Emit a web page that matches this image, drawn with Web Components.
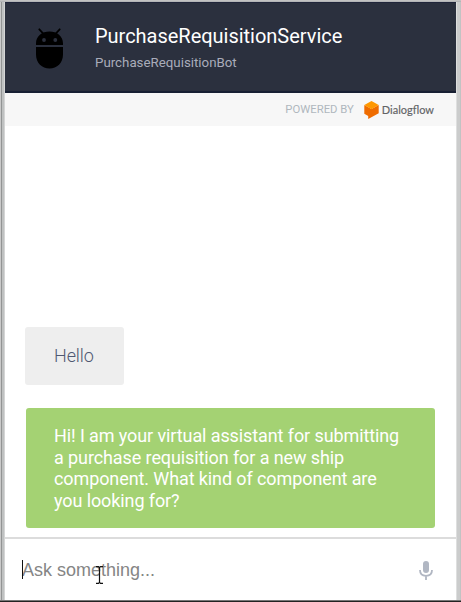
<!DOCTYPE html>
<html lang="en"><head><meta charset="utf-8"><title>PurchaseRequisitionService</title>
<style>
body{margin:0;width:461px;height:602px;overflow:hidden;font-family:Roboto,"Liberation Sans",sans-serif}
</style></head><body>
<chat-window>
<chat-header name="PurchaseRequisitionService"><span>PurchaseRequisitionBot</span></chat-header>
<powered-by></powered-by>
<chat-log>
<chat-bubble kind="user">Hello</chat-bubble>
<chat-bubble kind="bot">Hi! I am your virtual assistant for submitting<br>a purchase requisition for a new ship<br>component. What kind of component are<br>you looking for?</chat-bubble>
</chat-log>
<chat-input>Ask something...</chat-input>
</chat-window>
<script>
function define(name, html, setup){
  customElements.define(name, class extends HTMLElement{
    constructor(){super();this.attachShadow({mode:'open'}).innerHTML=html;}
    connectedCallback(){if(setup)setup(this,this.shadowRoot);}
  });
}
define('chat-window', `<style>
:host{display:grid;grid-template-columns:5px 451px 5px;grid-template-rows:2px 598px 2px;width:461px;height:602px;background:#fff}
.t{grid-column:1/4;background:linear-gradient(#c2c2c2 50%,#b4b5b7 50%)}
.l{background:linear-gradient(90deg,#c9c9c9 0 1px,#929494 1px 2px,#bfc1c1 2px 4px,#d4d5d5 4px)}
.r{background:linear-gradient(90deg,#dedfdf 0 1px,#cbcccc 1px 4px,#c2c3c3 4px)}
.b{grid-column:1/4;background:linear-gradient(#777 50%,#222 50%)}
main{display:flex;flex-direction:column;min-width:0}
</style><div class="t"></div><div class="l"></div><main><slot></slot></main><div class="r"></div><div class="b"></div>`);
define('chat-header', `<style>
:host{display:flex;box-sizing:border-box;height:91px;padding:0 0 0 30px;background:#2b303e;border-top:1px solid #20253a;border-bottom:2px solid #182033}
svg{width:29px;height:42px;margin-top:24px}
div{margin-left:31px;padding-top:20px}
h1{margin:0;font-weight:400;font-size:20px;line-height:26px;color:#fff;white-space:nowrap;letter-spacing:-.02px}
p{margin:5px 0 0;font-size:13.300px;line-height:18px;color:#a9acba}
</style>
<svg viewBox="0 0 29 42"><path d="M1 18V16.500C1 9 7 4.500 14.500 4.500S28 9 28 16.500V18zM1 20h27v7.500C28 36 22 41.500 14.500 41.500S1 36 1 27.500z"/><path d="M4.300 2.300l4.200 4.500M24.700 2.300l-4.200 4.500" stroke="#000" stroke-width="1.800" stroke-linecap="round"/><circle cx="9" cy="13" r="1.900" fill="#2b303e"/><circle cx="20.300" cy="13" r="1.900" fill="#2b303e"/></svg>
<div><h1></h1><p><slot></slot></p></div>`, (e,r)=>{r.querySelector('h1').textContent=e.getAttribute('name')});
define('powered-by', `<style>
:host{display:flex;height:33px;background:#f7f7f7;align-items:center;justify-content:flex-end;padding-right:22px;font-size:11.300px;color:#b0b7be}
svg{width:15px;height:18px;margin:0 3px 0 10px}
b{font-family:Lato,sans-serif;font-weight:400;font-size:11px;color:#626366;-webkit-text-stroke:.15px #626366}
</style><span>POWERED BY</span>
<svg viewBox="0 0 15 18"><path fill="#ef6c00" d="M.3 4L7.500 8l7.200-4v8.300L4.200 18v-3L.3 12.800z"/><path fill="#ff9800" d="M7.500 0l7.200 4-7.200 4.200L.3 4z"/></svg><b>Dialogflow</b>`);
define('chat-log', `<style>
:host{display:flex;flex:1;flex-direction:column;justify-content:flex-end;align-items:flex-start;gap:23px;padding:0 21px 9px 20px}
</style><slot></slot>`);
define('chat-bubble', `<style>
:host{display:block;box-sizing:border-box;border-radius:3px;font-size:18px;line-height:21.500px;white-space:nowrap;letter-spacing:-.1px}
:host([kind=user]){width:99px;height:58px;padding:18px 29px;background:#eee;color:#4f5872;font-weight:300}
:host([kind=bot]){margin-left:1px;width:409px;height:120px;padding:17px 28px;background:#a4d273;color:#fff}
</style><slot></slot>`);
define('chat-input', `<style>
:host{display:flex;box-sizing:border-box;height:63px;border-top:2px solid #dcdcdc;align-items:center;padding:1px 23px 0 17px;font:18px "Liberation Sans",Arial,sans-serif;color:#858585}
.field{position:relative;flex:1;white-space:nowrap}
.caret{position:absolute;left:0;top:0;width:1px;height:19px;background:#111}
.beam{position:absolute;left:73px;top:6px;width:9px;height:18px}
.mic{width:14px;height:19px}
</style><div class="field"><slot></slot><i class="caret"></i>
<svg class="beam" viewBox="0 0 9 18"><path d="M1 .7h2.500l1 1 1-1H8M4.500 1.500v15M1 17.300h2.500l1-1 1 1H8" fill="none" stroke="#111" stroke-width="1.200"/></svg></div>
<svg class="mic" viewBox="0 0 14 19"><rect x="4" y="0" width="6" height="12" rx="3" fill="#b1b7c3"/><path d="M1 9c0 4 2.700 5.800 6 5.800S13 13 13 9M7 15v4" fill="none" stroke="#b1b7c3" stroke-width="1.800"/></svg>`);
</script></body></html>
